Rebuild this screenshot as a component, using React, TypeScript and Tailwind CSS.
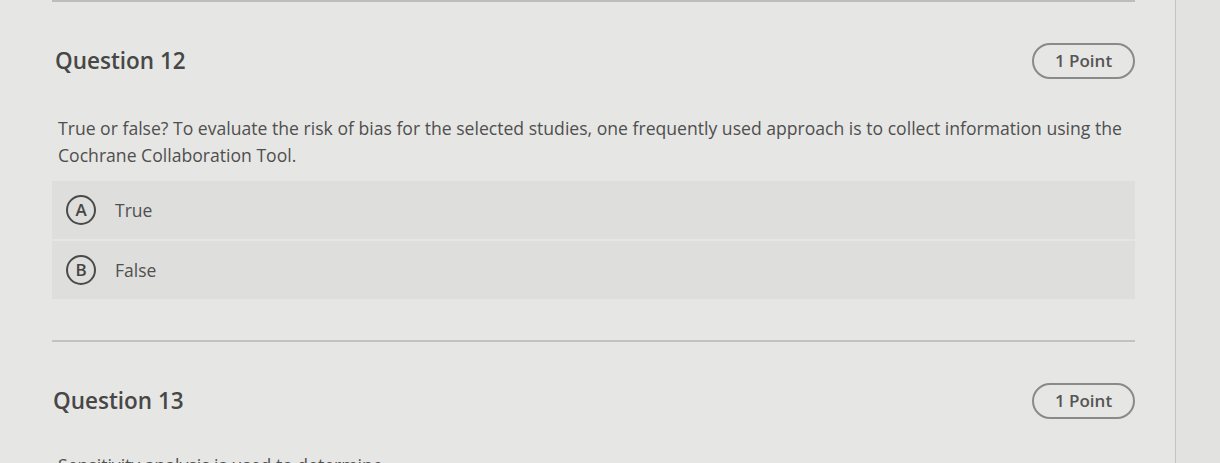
import { ReactNode } from 'react'

const PointPill = () => (
  <div className="flex h-[36px] w-[103px] items-center justify-center rounded-full border-2 border-[#8a8a88] text-[17px] font-semibold text-[#555555]">
    1 Point
  </div>
)

const Option = ({ letter, children }: { letter: string; children: ReactNode }) => (
  <div className="flex h-[58px] items-center gap-[19px] bg-[#dededc] pl-[14px]">
    <div className="flex h-[30px] w-[30px] items-center justify-center rounded-full border-2 border-[#4a4a4a] text-[17px] font-semibold text-[#454545]">
      {letter}
    </div>
    <span className="text-[17.5px] text-[#505050]">{children}</span>
  </div>
)

export default function App() {
  return (
    <div
      className="flex h-[463px] w-[1220px] overflow-hidden bg-[#e2e2e0]"
      style={{ fontFamily: '"Open Sans", "Liberation Sans", sans-serif' }}
    >
      <div className="w-[1176px] shrink-0 border-r border-[#c4c4c2] bg-[#e6e6e4] pl-[52px] pr-[40px]">
        <div className="h-[2px] bg-[#bdbdbb]" />

        <div className="mt-[41px] flex items-center justify-between pl-[3px]">
          <h2 className="text-[22.5px] font-semibold text-[#474747]">Question 12</h2>
          <PointPill />
        </div>

        <p className="mt-[36px] pl-[6px] pr-[6px] text-[17.6px] leading-[27px] text-[#4f4f4f]">
          True or false? To evaluate the risk of bias for the selected studies, one frequently used approach is to collect information using the Cochrane Collaboration Tool.
        </p>

        <div className="mt-[12px] flex flex-col gap-[2px]">
          <Option letter="A">True</Option>
          <Option letter="B">False</Option>
        </div>

        <div className="mt-[41px] h-[2px] bg-[#c2c2c0]" />

        <div className="mt-[41px] flex items-center justify-between pl-[1px]">
          <h2 className="text-[22.5px] font-semibold text-[#474747]">Question 13</h2>
          <PointPill />
        </div>

        <p className="mt-[33px] pl-[6px] text-[17.6px] leading-[27px] text-[#4f4f4f]">
          Sensitivity analysis is used to determine
        </p>
      </div>
      <div className="flex-1" />
    </div>
  )
}
